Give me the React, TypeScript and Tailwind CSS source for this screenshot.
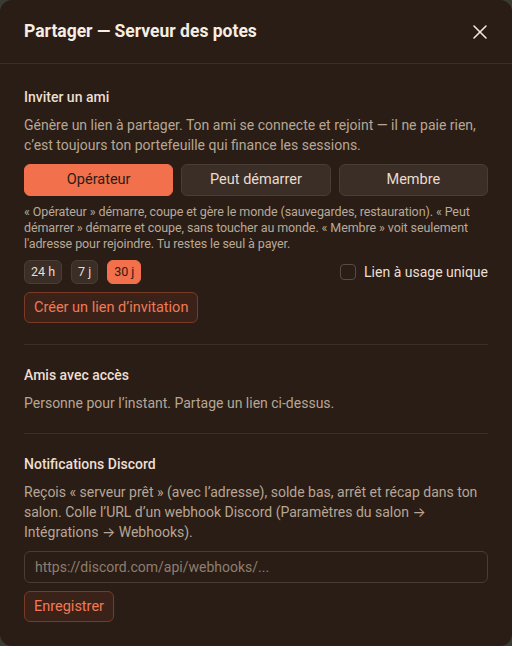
import { X } from 'lucide-react'

const roles = ['Opérateur', 'Peut démarrer', 'Membre']
const durations = ['24 h', '7 j', '30 j']

const chip = 'h-6 rounded-md border px-[6px] text-[12.5px] leading-none'
const roleBtn = 'h-8 rounded-md border text-[14.5px]'
const ghostBtn =
  'h-[31px] rounded-md border border-[#7a3a26] bg-[#3b2219] px-[9px] text-[14.5px] text-[#f07a57]'

function Arrow() {
  return <span style={{ fontFamily: 'Inter, sans-serif' }}>→</span>
}

export default function App() {
  const role = 'Opérateur'
  const duration = '30 j'

  return (
    <div
      className="h-[646px] w-[512px] bg-[#3a3c34]"
      style={{ fontFamily: 'Roboto, "Noto Sans", sans-serif' }}
    >
      <div className="flex h-full flex-col overflow-hidden rounded-xl bg-[#2a1d15] text-[#ecdfd2]">
        <div className="flex h-16 shrink-0 items-center justify-between border-b border-[#3b2f27] pl-6 pr-5">
          <h2 className="text-[17.5px] font-bold text-[#f6ede3]">Partager — Serveur des potes</h2>
          <X className="h-6 w-6 text-[#f0e6da]" strokeWidth={1.6} />
        </div>

        <div className="px-6 pt-[23px]">
          <section>
            <h3 className="text-[14px] font-medium leading-5">Inviter un ami</h3>
            <p className="mt-2 text-[14px] leading-5 text-[#b7a696]">
              Génère un lien à partager. Ton ami se connecte et rejoint — il ne paie rien,
              <br />
              c’est toujours ton portefeuille qui finance les sessions.
            </p>
            <div className="mt-[9px] grid grid-cols-3 gap-2">
              {roles.map((r) => (
                <button
                  key={r}
                  className={
                    r === role
                      ? `${roleBtn} border-[#f2704b] bg-[#f2704b] text-[#2a1d15]`
                      : `${roleBtn} border-[#4a3d35] bg-[#3a2e27] text-[#eadccf]`
                  }
                >
                  {r}
                </button>
              ))}
            </div>
            <p className="mt-2 text-[12.5px] leading-4 tracking-[-0.1px] text-[#b9a999]">
              « Opérateur » démarre, coupe et gère le monde (sauvegardes, restauration). « Peut
              <br />
              démarrer » démarre et coupe, sans toucher au monde. « Membre » voit seulement
              <br />
              l'adresse pour rejoindre. Tu restes le seul à payer.
            </p>
            <div className="mt-2 flex items-center justify-between">
              <div className="flex gap-[9px]">
                {durations.map((d) => (
                  <button
                    key={d}
                    className={
                      d === duration
                        ? `${chip} border-[#f2704b] bg-[#f2704b] text-[#2a1d15]`
                        : `${chip} border-[#4a3d35] bg-[#3a2e27] text-[#eadccf]`
                    }
                  >
                    {d}
                  </button>
                ))}
              </div>
              <label className="flex items-center gap-2 text-[14px] text-[#ecdfd2]">
                <span className="h-4 w-4 rounded border border-[#5a4b41]" />
                Lien à usage unique
              </label>
            </div>
            <button className={`mt-2 ${ghostBtn}`}>Créer un lien d’invitation</button>
          </section>

          <div className="mb-5 mt-[21px] h-px bg-[#3b2f27]" />

          <section>
            <h3 className="text-[14px] font-medium leading-5">Amis avec accès</h3>
            <p className="mt-2 text-[14px] leading-5 text-[#b7a696]">
              Personne pour l’instant. Partage un lien ci-dessus.
            </p>
          </section>

          <div className="my-5 h-px bg-[#3b2f27]" />

          <section>
            <h3 className="text-[14px] font-medium leading-5">Notifications Discord</h3>
            <p className="mt-2 text-[14px] leading-5 text-[#b7a696]">
              Reçois « serveur prêt » (avec l’adresse), solde bas, arrêt et récap dans ton
              <br />
              salon. Colle l’URL d’un webhook Discord (Paramètres du salon <Arrow />
              <br />
              Intégrations <Arrow /> Webhooks).
            </p>
            <input
              className="mt-[9px] block h-8 w-full rounded-md border border-[#4a3d35] bg-transparent px-[10px] text-[14px] text-[#ecdfd2] outline-none placeholder:text-[#8e7e70]"
              placeholder="https://discord.com/api/webhooks/..."
            />
            <button className={`mt-2 ${ghostBtn}`}>Enregistrer</button>
          </section>
        </div>
      </div>
    </div>
  )
}
